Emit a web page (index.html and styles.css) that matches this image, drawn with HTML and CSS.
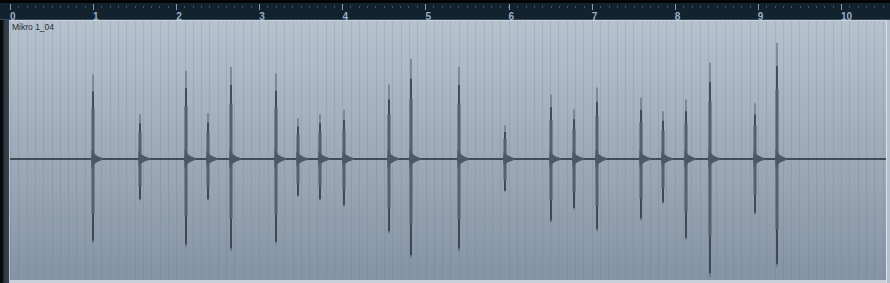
FILE: index.html
```html
<!DOCTYPE html>
<html lang="en">
  <head>
    <meta charset="UTF-8" />
    <title>Mikro 1_04</title>
    <link rel="stylesheet" href="styles.css">
  </head>
  <body>
    <div class="topbar"></div>
    <div class="ruler">
      <div class="bar"><span>0</span></div>
      <div class="bar"><span>1</span></div>
      <div class="bar"><span>2</span></div>
      <div class="bar"><span>3</span></div>
      <div class="bar"><span>4</span></div>
      <div class="bar"><span>5</span></div>
      <div class="bar"><span>6</span></div>
      <div class="bar"><span>7</span></div>
      <div class="bar"><span>8</span></div>
      <div class="bar"><span>9</span></div>
      <div class="bar last"><span>10</span></div>
    </div>
    <div class="ruler-edge"></div>

    <div class="track">
      <div class="track-side"></div>
      <div class="event">
        <div class="event-name">Mikro 1_04</div>
        <svg id="wave" class="wave" viewBox="10 21 876 259" preserveAspectRatio="none"></svg>
      </div>
      <div class="track-end"></div>
    </div>

    <script>
      // x, top, bottom of each hit (page coords), zero line at y=158
      const hits = [
          [93, 73, 243], [140, 113, 200], [186, 69, 247], [208, 112, 200],
          [231, 65, 251], [276, 72, 244], [298, 117, 196], [320, 113, 200],
          [344, 109, 206], [389, 83, 233], [411, 57, 258], [459, 65, 251],
          [505, 124, 191], [551, 93, 222], [574, 108, 209], [597, 86, 231],
          [641, 96, 220], [663, 110, 203], [686, 98, 240], [710, 61, 277],
          [755, 102, 214], [777, 41, 267]
      ];
      const mid = 158;
      const ns = 'http://www.w3.org/2000/svg';
      const svg = document.getElementById('wave');

      function add(tag, attrs) {
          const el = document.createElementNS(ns, tag);
          for (const k in attrs) el.setAttribute(k, attrs[k]);
          svg.appendChild(el);
      }

      add('line', { x1: 10, y1: mid, x2: 886, y2: mid, stroke: '#262e36', 'stroke-width': 1.5 });

      hits.forEach(([x, top, bottom]) => {
          const up = mid - top;
          const down = bottom - mid;
          // faint outer tips
          add('line', { x1: x, y1: top, x2: x, y2: bottom, stroke: '#66737f', 'stroke-width': 1.3 });
          // dark core
          add('line', { x1: x, y1: mid - up * 0.8, x2: x, y2: mid + down * 0.97, stroke: '#1c252d', 'stroke-width': 1.2 });
          // body
          add('rect', { x: x - 1.6, y: mid - up * 0.6, width: 3.2, height: up * 0.6 + down * 0.65, fill: '#57656f', opacity: 0.9 });
          // decay tail
          const t = Math.min(10, 6 + (up + down) / 45);
          add('path', {
              d: `M${x - 1.5} ${mid - t} Q${x + 1} ${mid - 3} ${x + 10} ${mid - 0.8} L${x + 10} ${mid + 0.8} Q${x + 1} ${mid + 3} ${x - 1.5} ${mid + t} Z`,
              fill: '#4b5966'
          });
          add('rect', { x: x - 1.8, y: mid - 3.5, width: 4.5, height: 7, rx: 1.5, fill: '#4b5966' });
      });
    </script>
  </body>
</html>
```

FILE: styles.css
```css
html, body {
    margin: 0;
    padding: 0;
}
body {
    width: 890px;
    height: 283px;
    overflow: hidden;
    background-color: #0b1722;
    font-family: "Liberation Sans", Arial, sans-serif;
}
.topbar {
    height: 3px;
    background-color: #040607;
}
.ruler {
    display: flex;
    height: 16px;
    padding-left: 10px;
    background-color: #13222f;
}
.bar {
    flex: none;
    width: 83.1px;
    background-image: repeating-linear-gradient(to right, #455669 0 1px, transparent 1px 8.31px);
    background-size: 100% 2px;
    background-position: 0 3px;
    background-repeat: no-repeat;
}
.bar.last {
    width: 49px;
}
.bar::before {
    content: "";
    display: block;
    width: 1px;
    height: 6px;
    margin-top: 1px;
    background-color: #8e9bab;
}
.bar span {
    display: block;
    margin-top: 3px;
    font-size: 10px;
    font-weight: bold;
    line-height: 7px;
    color: #9cb0c5;
}
.ruler-edge {
    height: 1px;
    background-color: #33475a;
}
.track {
    display: flex;
    height: 263px;
}
.track-side {
    width: 10px;
    box-sizing: border-box;
    background: linear-gradient(to right, #050708 0, #0d1215 3px, #2d363f 4px, #3a444e 9px);
    border-right: 1px solid #b6c3d0;
}
.event {
    flex: 1;
    display: flex;
    flex-direction: column;
    border-top: 1px solid #c9d3dd;
    border-bottom: 3px solid #c9d0d7;
    background-color: #9aa8b7;
    background-image:
        repeating-linear-gradient(to right, rgba(70, 88, 108, 0.13) 0 1px, transparent 1px 8.31px),
        linear-gradient(to bottom, #b6c2ce 0, #a2afbd 40%, #8594a5 100%);
}
.event-name {
    height: 0;
    padding: 2px 0 0 2px;
    font-size: 8.5px;
    line-height: 9px;
    color: #252e37;
}
.wave {
    flex: 1;
    width: 100%;
}
.track-end {
    width: 4px;
    box-sizing: border-box;
    border-left: 1px solid #d9e0e6;
    background-color: #b3bfca;
}
```
